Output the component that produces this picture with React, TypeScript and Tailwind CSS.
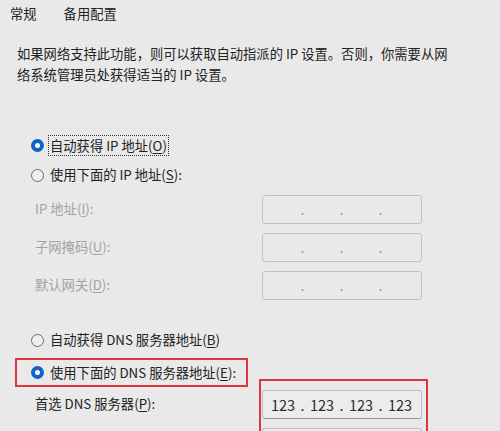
import React from 'react';

const font = { fontFamily: '"Noto Sans CJK SC", "Noto Sans", sans-serif' };

const Key: React.FC<{ k: string }> = ({ k }) => (
  <span className="underline underline-offset-[2px] decoration-1">{k}</span>
);

const Radio: React.FC<{ checked?: boolean }> = ({ checked }) =>
  checked ? (
    <span className="flex h-[13px] w-[13px] shrink-0 items-center justify-center rounded-full bg-[#1062c4]">
      <span className="h-[5px] w-[5px] rounded-full bg-white" />
    </span>
  ) : (
    <span className="h-[13px] w-[13px] shrink-0 rounded-full border border-[#6b6b6b] bg-[#efefef]" />
  );

interface IpBoxProps {
  value?: string[];
  disabled?: boolean;
  blank?: boolean;
}

const IpBox: React.FC<IpBoxProps> = ({ value, disabled, blank }) => {
  const parts = value ?? ['', '', '', ''];
  const dot = disabled ? 'text-[#9d9d9d]' : 'text-[#333]';
  return (
    <div
      className={`flex h-[29px] w-[160px] items-center rounded-[3px] border pl-[5px] text-[14.5px] ${
        disabled ? 'border-[#c3c3c3] bg-[#e9e9e9]' : 'border-[#bdbdbd] border-b-[#9a9a9a] bg-[#ececec]'
      }`}
    >
      {!blank &&
        parts.map((p, i) => (
          <React.Fragment key={i}>
            <span className="w-[30px] text-center text-[#2b2b2b]">{p}</span>
            {i < 3 && <span className={`w-[9px] text-center ${dot}`}>.</span>}
          </React.Fragment>
        ))}
    </div>
  );
};

const FieldRow: React.FC<{ label: React.ReactNode; disabled?: boolean }> = ({ label, disabled }) => (
  <div className="flex h-[38px] items-center pl-[35px]">
    <span className={`w-[227px] ${disabled ? 'text-[#a3a3a3]' : 'text-[#222]'}`}>{label}</span>
    <IpBox disabled={disabled} />
  </div>
);

export default function App() {
  return (
    <div
      className="h-[431px] w-[500px] overflow-hidden bg-[#e9e9e9] text-[13.3px] text-[#222]"
      style={font}
    >
      {/* tabs */}
      <div className="flex h-[27px] items-center gap-[27px] pl-[10px]">
        <span>常规</span>
        <span>备用配置</span>
      </div>

      <p className="mt-[16px] px-[17px] leading-[21px]">
        如果网络支持此功能，则可以获取自动指派的 IP 设置。否则，你需要从网
        <br />
        络系统管理员处获得适当的 IP 设置。
      </p>

      <div className="mt-[45px]">
        <div className="flex h-[30px] items-center gap-[4px] pl-[31px]">
          <Radio checked />
          <span className="border border-dotted border-[#333] px-[1px] leading-[19px]">
            自动获得 IP 地址(<Key k="O" />)
          </span>
        </div>
        <div className="flex h-[30px] items-center gap-[4px] pl-[31px]">
          <Radio />
          <span className="pl-[2px]">
            使用下面的 IP 地址(<Key k="S" />):
          </span>
        </div>

        <FieldRow disabled label={<>IP 地址(<Key k="I" />):</>} />
        <FieldRow disabled label={<>子网掩码(<Key k="U" />):</>} />
        <FieldRow disabled label={<>默认网关(<Key k="D" />):</>} />
      </div>

      <div className="mt-[21px]">
        <div className="flex h-[30px] items-center gap-[4px] pl-[31px]">
          <Radio />
          <span className="pl-[2px]">
            自动获得 DNS 服务器地址(<Key k="B" />)
          </span>
        </div>
        <div className="mt-[3px] ml-[15px] flex h-[29px] w-[233px] items-center gap-[4px] border-2 border-[#d8393c] pl-[14px]">
          <Radio checked />
          <span className="pl-[2px]">
            使用下面的 DNS 服务器地址(<Key k="E" />):
          </span>
        </div>

        <div className="mt-[2px] flex pl-[35px]">
          <div className="flex w-[227px] flex-col">
            <span className="flex h-[30px] items-center">
              首选 DNS 服务器(<Key k="P" />):
            </span>
          </div>
          <div className="relative flex flex-col gap-[9px] pt-[1px]">
            <IpBox value={['123', '123', '123', '123']} />
            <IpBox blank />
            <div className="pointer-events-none absolute -top-[10px] -left-[3px] -right-[6px] -bottom-[10px] border-2 border-[#d8393c]" />
          </div>
        </div>
      </div>
    </div>
  );
}
